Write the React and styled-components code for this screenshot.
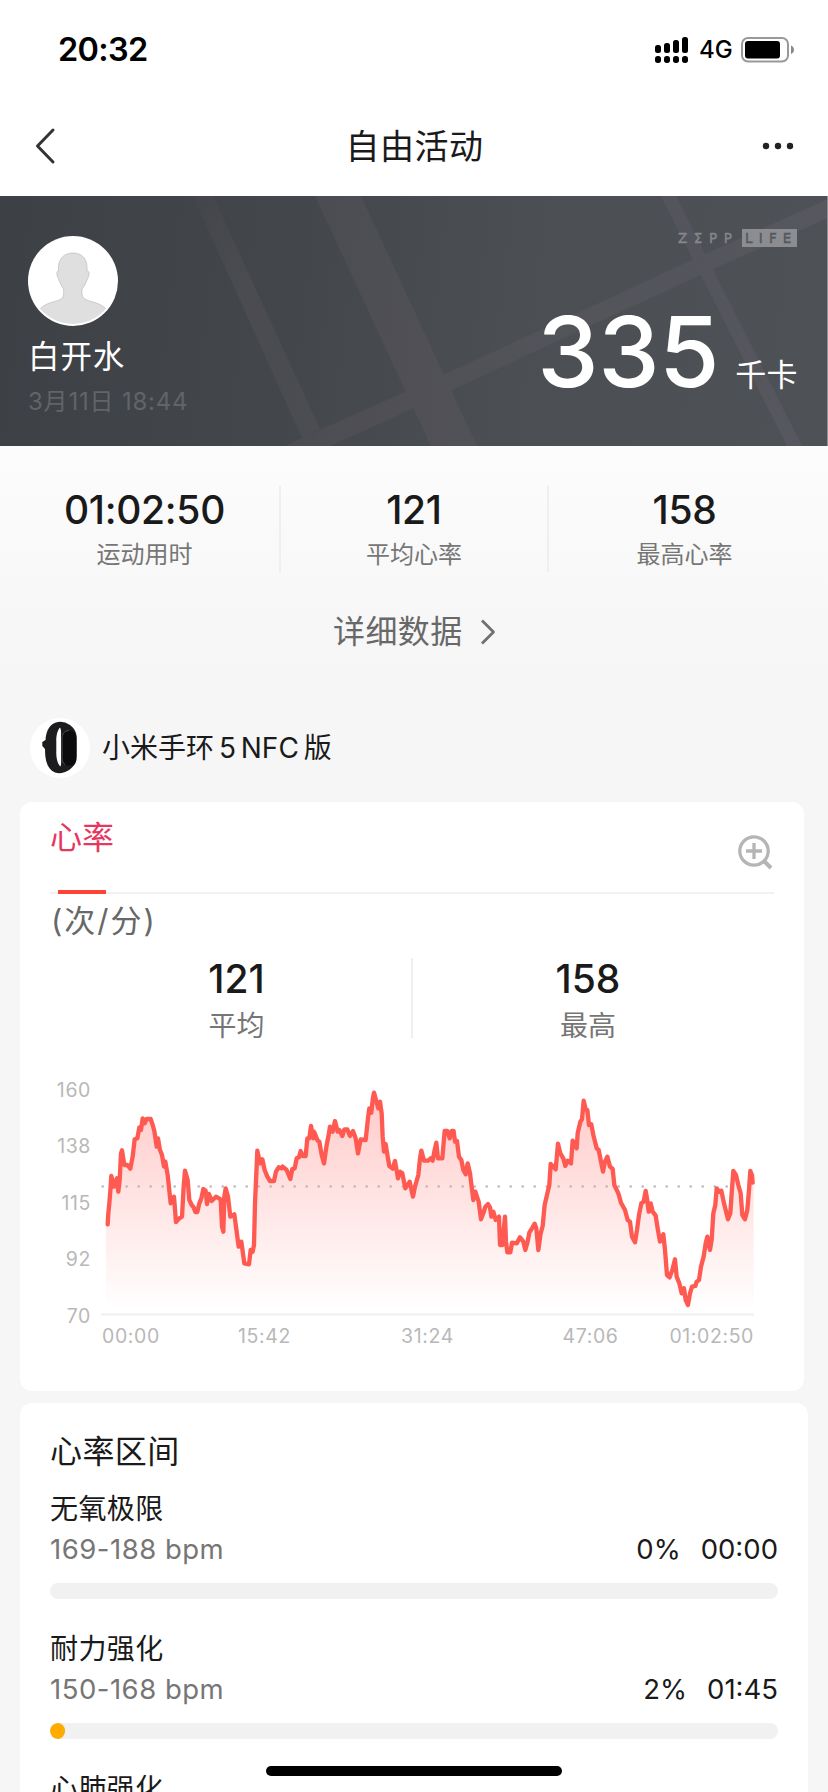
import React from "react";
import styled, { createGlobalStyle } from "styled-components";

const GlobalStyle = createGlobalStyle`
  * { box-sizing: border-box; }
  body {
    margin: 0;
    background: #f6f6f6;
    font-family: Inter, "Noto Sans CJK SC", sans-serif;
    color: #1a1a1a;
  }
`;

const Screen = styled.div`
  position: relative;
  width: 828px;
  height: 1792px;
  overflow: hidden;
  background: #f6f6f6;
`;

const Text = styled.span`
  display: block;
  white-space: nowrap;
  font-size: ${(p) => p.$size}px;
  line-height: ${(p) => p.$line}px;
  font-weight: ${(p) => p.$weight || 400};
  letter-spacing: ${(p) => p.$spacing || 0}px;
  color: ${(p) => p.$color || "#1a1a1a"};
`;

const StatusBar = styled.div`
  display: flex;
  align-items: center;
  justify-content: space-between;
  height: 100px;
  padding: 0 34px 0 58px;
  background: #fff;
`;

const StatusIcons = styled.div`
  display: flex;
  align-items: center;
`;

const Network = styled(Text)`
  margin: 0 10px 0 11px;
  width: 32px;
`;

const NavBar = styled.div`
  display: flex;
  align-items: center;
  justify-content: space-between;
  height: 96px;
  padding: 0 34px;
  background: #fff;

  svg { display: block; margin-top: -4px; }
`;

const NavTitle = styled(Text)`
  margin-top: -3px;
  padding-left: 11px;
`;

const Hero = styled.section`
  position: relative;
  display: flex;
  justify-content: space-between;
  height: 250px;
  padding: 33px 30px 0 28px;
  border-right: 1px solid #909296;
  background: linear-gradient(97deg, #3d4045 0%, #43464b 35%, #4b4e53 62%, #4e5156 100%);
`;

const Roads = styled.svg`
  position: absolute;
  left: 0;
  top: 0;
`;

const HeroSide = styled.div`
  position: relative;
  display: flex;
  flex-direction: column;
  align-items: ${(p) => (p.$end ? "flex-end" : "flex-start")};
`;

const Avatar = styled.svg`
  display: block;
  margin: 7px 0 8px;
`;

const Brand = styled.div`
  display: flex;
  align-items: center;
  height: 18px;
`;

const BrandWord = styled(Text)`
  width: 64px;
  font-family: "DejaVu Sans", sans-serif;
  -webkit-text-stroke: 0.4px currentColor;
`;

const BrandBox = styled.div`
  width: 55px;
  height: 18px;
  padding-left: 3px;
  background: #8b8d91;
`;

const Calories = styled.div`
  display: flex;
  align-items: flex-start;
  margin-top: 45px;
`;

const Unit = styled(Text)`
  margin: 43px -1px 0 16px;
`;

const Summary = styled.section`
  height: 256px;
  padding: 40px 8px 0;
  background: linear-gradient(#fcfcfc, #f6f6f6 85%);
`;

const StatRow = styled.div`
  display: grid;
  grid-template-columns: ${(p) => p.$columns};
  grid-template-rows: 100%;
  height: ${(p) => p.$height}px;
  padding: 0 ${(p) => p.$inset || 0}px;
`;

const Stat = styled.div`
  display: flex;
  flex-direction: column;
  align-items: center;
  border-left: 2px solid ${(p) => (p.$divided ? "#efefef" : "transparent")};
`;

const DetailLink = styled.div`
  display: flex;
  align-items: center;
  gap: 17px;
  height: 48px;
  margin: 36px 0 0 325px;

  svg { display: block; }
`;

const Device = styled.div`
  display: flex;
  align-items: center;
  gap: 12px;
  height: 60px;
  margin: 16px 0 24px 30px;

  svg { display: block; }
`;

const DeviceName = styled(Text)`
  word-spacing: -3px;
`;

const Card = styled.section`
  width: ${(p) => p.$width}px;
  height: ${(p) => p.$height}px;
  margin: 0 0 12px 20px;
  padding: 0 30px;
  border-radius: 12px;
  background: #fff;
`;

const TabBar = styled.div`
  display: flex;
  justify-content: space-between;
  height: 92px;
  border-bottom: 2px solid #f1f1f1;
`;

const Tab = styled.div`
  display: flex;
  flex-direction: column;
  align-items: center;
  justify-content: space-between;
  width: 64px;
  height: 92px;
  padding-top: 12px;
`;

const TabMark = styled.div`
  width: 48px;
  height: 4px;
  background: #ff4336;
`;

const ZoomIcon = styled.svg`
  display: block;
  margin-top: 30px;
`;

const Units = styled(Text)`
  margin: 3px 0 13px 1px;
`;

const Chart = styled.svg`
  display: block;
  margin-top: 32px;
`;

const ZoneTitle = styled(Text)`
  padding-top: 25px;
  margin-bottom: 13px;
`;

const Zone = styled.div`
  height: 140px;
`;

const ZoneFigures = styled.div`
  display: flex;
  justify-content: space-between;
  height: 40px;
`;

const ZoneValues = styled.div`
  display: flex;
  gap: 20px;
`;

const Track = styled.div`
  height: 16px;
  margin-top: 14px;
  border-radius: 8px;
  background: #f1f1f1;
  overflow: hidden;
`;

const Fill = styled.div`
  height: 16px;
  border-radius: 8px;
  background: #ffab00;
`;

const HomeIndicator = styled.div`
  position: absolute;
  left: 266px;
  bottom: 16px;
  width: 296px;
  height: 10px;
  border-radius: 5px;
  background: #000;
`;

/* Heart-rate trace, three units per pixel, origin at the chart's top left. */
const TRACE = `203,463 205,430 208,400 212,350 214,318 222,350 231,325 235,365 239,330 243,250
246,241 253,285 262,285 271,296 278,260 284,208 292,205 298,172 303,180 308,145 314,160 320,147
332,147 338,165 343,183 350,230 354,205 360,240 366,255 372,290 376,275 383,315 392,400 402,380
408,456 418,445 426,440 431,350 435,302 443,330 448,390 455,405 461,412 466,426 472,426 478,400
484,385 490,357 497,362 501,402 507,372 515,393 528,380 542,388 546,470 550,485 553,380 557,355
564,380 571,440 583,433 588,470 596,530 604,515 613,580 627,583 632,540 638,545 642,525 645,400
652,242 660,280 667,268 674,300 682,320 690,333 702,333 708,305 716,292 724,295 728,290 740,300
751,327 757,297 764,295 770,265 777,262 782,243 788,258 797,258 802,205 808,205 813,168 820,205
822,185 833,212 838,215 845,255 852,280 860,225 866,195 870,170 878,185 885,153 893,185 898,180
907,198 913,178 922,178 930,198 939,183 947,205 954,250 962,208 977,210 984,145 988,115 994,128
998,90 1002,68 1008,90 1015,115 1020,95 1025,130 1028,200 1032,245 1037,222 1043,260 1048,288
1058,296 1065,273 1074,325 1080,305 1087,310 1096,355 1109,335 1119,380 1125,350 1135,315
1140,265 1144,242 1152,272 1164,272 1172,265 1178,272 1184,240 1189,218 1194,265 1207,265
1210,230 1214,183 1222,183 1229,205 1235,183 1241,183 1245,215 1251,213 1257,260 1264,270
1270,300 1277,313 1283,280 1290,310 1295,350 1300,390 1306,365 1316,395 1323,448 1330,430
1336,410 1344,402 1350,412 1354,440 1360,425 1367,450 1377,440 1380,525 1387,525 1395,440
1398,515 1402,547 1411,547 1416,518 1430,520 1440,502 1450,515 1456,540 1463,515 1468,488
1476,475 1484,461 1489,475 1495,540 1502,490 1508,468 1514,405 1521,375 1528,345 1532,282
1547,298 1554,221 1561,250 1570,265 1576,288 1583,272 1593,280 1598,212 1610,235 1613,190
1621,155 1626,148 1631,92 1637,118 1642,120 1647,165 1654,163 1660,195 1670,235 1676,240
1682,270 1689,305 1695,275 1702,260 1710,290 1718,297 1723,345 1735,370 1743,398 1755,420
1763,450 1770,455 1776,500 1785,517 1791,480 1797,435 1804,400 1811,395 1817,363 1821,385
1826,425 1832,400 1838,425 1847,437 1853,475 1860,515 1870,493 1875,540 1881,615 1889,622
1897,600 1905,568 1910,620 1918,640 1925,670 1932,655 1937,690 1944,705 1950,670 1956,650
1966,648 1970,635 1977,630 1983,590 1991,560 1997,520 2002,500 2010,540 2015,510 2020,430
2026,405 2030,355 2037,365 2044,362 2052,400 2064,448 2071,430 2075,370 2080,303 2088,315
2095,345 2102,370 2107,435 2115,448 2122,420 2127,360 2131,303 2136,315 2138,338`;

const Y_TICKS = [
  ["160", 19.5],
  ["138", 75.5],
  ["115", 132.5],
  ["92", 188.5],
  ["70", 245.5],
];
const X_TICKS = [
  ["00:00", 62, "start"],
  ["15:42", 224.5, "middle"],
  ["31:24", 387.5, "middle"],
  ["47:06", 550.5, "middle"],
  ["01:02:50", 714, "end"],
];

function HeartRateChart() {
  return (
    <Chart width="724" height="290" viewBox="10 0 724 290">
      <defs>
        <linearGradient id="area" gradientUnits="userSpaceOnUse" x1="0" y1="68" x2="0" y2="725">
          <stop offset="0" stopColor="#ff5550" stopOpacity="0.31" />
          <stop offset="1" stopColor="#ff5550" stopOpacity="0" />
        </linearGradient>
      </defs>
      <g transform="scale(0.33333)">
        <polygon points={`198,733 198,463 ${TRACE} 2141,338 2141,733`} fill="url(#area)" />
      </g>
      <line x1="62.7" y1="116.5" x2="700" y2="116.5" stroke="#bdb6b6" strokeWidth="2.6" strokeLinecap="round" strokeDasharray="0 12" />
      <line x1="61" y1="244.5" x2="714" y2="244.5" stroke="#f3f2f3" strokeWidth="2.5" />
      <g transform="scale(0.33333)">
        <polyline points={TRACE} fill="none" stroke="#ff5a52" strokeWidth="13" strokeLinejoin="round" strokeLinecap="round" />
      </g>
      <g fill="#b8b8b8" fontSize="19.5" letterSpacing="0.6">
        {Y_TICKS.map(([label, y]) => (
          <text key={label} x="51" y={y + 7} textAnchor="end">{label}</text>
        ))}
        {X_TICKS.map(([label, x, anchor]) => (
          <text key={label} x={x} y="272.5" textAnchor={anchor}>{label}</text>
        ))}
      </g>
    </Chart>
  );
}

const ZONES = [
  { name: "无氧极限", range: "169-188 bpm", percent: "0%", time: "00:00", fill: 0 },
  { name: "耐力强化", range: "150-168 bpm", percent: "2%", time: "01:45", fill: 2.06 },
  { name: "心肺强化" },
];

const SUMMARY = [
  ["01:02:50", "运动用时"],
  ["121", "平均心率"],
  ["158", "最高心率"],
];

export default function App() {
  return (
    <Screen>
      <GlobalStyle />
      <StatusBar>
        <Text $size={32.5} $line={40} $weight={600} $spacing={-0.7} $color="#000">20:32</Text>
        <StatusIcons>
          <svg width="33" height="26" viewBox="0 0 33 26">
            <rect x="0" y="8" width="6" height="8" rx="2.5" />
            <rect x="9" y="6" width="6" height="10" rx="2.5" />
            <rect x="18" y="3" width="6" height="13" rx="2.5" />
            <rect x="27" y="0" width="6" height="16" rx="2.5" />
            {[0, 9, 18, 27].map((x) => (
              <rect key={x} x={x} y="19" width="6" height="7" rx="2.7" />
            ))}
          </svg>
          <Network $size={24} $line={30} $weight={450} $color="#000">4G</Network>
          <svg width="53" height="26" viewBox="0 0 53 26">
            <rect x="1" y="1" width="46" height="23.5" rx="6" fill="none" stroke="#999" strokeWidth="2" />
            <rect x="4" y="4" width="35" height="17.5" rx="3" />
            <path d="M50 8.500c4 1.500 4 7 0 8.500z" fill="#888" />
          </svg>
        </StatusIcons>
      </StatusBar>
      <NavBar>
        <svg width="22" height="38" viewBox="0 0 22 38" fill="none" stroke="#333" strokeWidth="3">
          <path d="M19 3L3.500 19L19 35" strokeLinecap="round" strokeLinejoin="round" />
        </svg>
        <NavTitle $size={34} $line={48} $spacing={0.5}>自由活动</NavTitle>
        <svg width="32" height="10" viewBox="0 0 32 10" fill="#222">
          <circle cx="4" cy="5" r="3.2" />
          <circle cx="16" cy="5" r="3.2" />
          <circle cx="28" cy="5" r="3.2" />
        </svg>
      </NavBar>
      <Hero>
        <Roads width="827" height="250" viewBox="0 0 827 250">
          <defs>
            <linearGradient id="fade" gradientUnits="userSpaceOnUse" x1="190" y1="0" x2="240" y2="90">
              <stop offset="0" stopColor="#5e5a61" stopOpacity="0.25" />
              <stop offset="1" stopColor="#5e5a61" />
            </linearGradient>
            <linearGradient id="road" gradientUnits="userSpaceOnUse" x1="300" y1="0" x2="800" y2="0">
              <stop offset="0" stopColor="#5e5a61" />
              <stop offset="1" stopColor="#6a6472" />
            </linearGradient>
          </defs>
          <g opacity="0.32" fill="url(#road)">
            <path d="M193 0H213L320 233L302 242Z" fill="url(#fade)" />
            <path d="M315 0H361L477 250H431Z" />
            <path d="M661 0H676L802 250H787Z" />
            <path d="M285 250L302 242L405 196L445 178L692 64L828 3V22L711 74L452 194L414 212L337 247L330 250Z" />
          </g>
        </Roads>
        <HeroSide>
          <Avatar width="90" height="90" viewBox="0 0 90 90">
            <defs>
              <clipPath id="face"><circle cx="45" cy="45" r="43" /></clipPath>
            </defs>
            <circle cx="45" cy="45" r="45" fill="#fff" />
            <path
              clipPath="url(#face)"
              d="M45 17C36 17 30.500 23 30.500 31V35C28 35 28.500 39 30.500 43C32 46 33 50 35.500 53C36 58 35.500 61 34 62.500C29 66 18 66 12 73L12 90H78V73C72 66 61 66 56 62.500C54.500 61 53.500 58 54 53C57 50 58 46 59.500 43C61.500 39 62 35 59 35V31C59 23 54 17 45 17Z"
              fill="#dfdfdf"
              stroke="#b5b5b5"
              strokeWidth="0.6"
            />
          </Avatar>
          <Text $size={31.5} $line={46} $spacing={0.9} $color="#fff">白开水</Text>
          <Text $size={24} $line={44} $spacing={0.8} $color="#626468">3月11日 18:44</Text>
        </HeroSide>
        <HeroSide $end>
          <Brand>
            <BrandWord $size={13.5} $line={18} $spacing={6.6} $color="#85878b">ZΣPP</BrandWord>
            <BrandBox>
              <BrandWord as="span" $size={13.5} $line={18} $spacing={6.2} $color="#55575c">LIFE</BrandWord>
            </BrandBox>
          </Brand>
          <Calories>
            <Text $size={98} $line={120} $weight={500} $spacing={-0.5} $color="#fff">335</Text>
            <Unit $size={31} $line={80} $spacing={0.4} $color="#fff">千卡</Unit>
          </Calories>
        </HeroSide>
      </Hero>
      <Summary>
        <StatRow $columns="271px 268px 273px" $height={86}>
          {SUMMARY.map(([value, label], i) => (
            <Stat key={label} $divided={i > 0}>
              <Text $size={39} $line={48} $weight={500} $spacing={-0.3}>{value}</Text>
              <Text $size={24} $line={42} $color="#767676">{label}</Text>
            </Stat>
          ))}
        </StatRow>
        <DetailLink>
          <Text $size={32} $line={48} $spacing={0.4} $color="#686868">详细数据</Text>
          <svg width="16" height="28" viewBox="0 0 16 28" fill="none" stroke="#707070" strokeWidth="2.8">
            <path d="M2 2.500L13.500 14L2 25.500" strokeLinejoin="round" />
          </svg>
        </DetailLink>
      </Summary>
      <Device>
        <svg width="60" height="60" viewBox="0 0 60 60">
          <circle cx="30" cy="30" r="30" fill="#fff" />
          <path
            fillRule="evenodd"
            d="M28 4C20 5 16 13 15.500 22L12.300 24L12.300 28L15 31C15 42 17 51 25 54.500C32 57 40 53 45 46Q46.700 43 46.700 38V20Q46.700 12 40 7Q34 3 28 4ZM30 9.500C27.500 12 26 18 26.300 24V33C26 40 27.500 46 30.500 48.500C31.500 46 31 42 31 38V20C31 15 31.500 12 30 9.500Z"
            fill="#1c1c1e"
          />
          <rect x="31.500" y="12.500" width="14.800" height="35" rx="6.500" fill="#0b0b0d" />
          <path d="M39 12.500C34 13 32 16 32 20V40C32 43 33 45 35 46.500" fill="none" stroke="#5a5a5c" strokeWidth="0.9" />
        </svg>
        <DeviceName $size={28} $line={42} $spacing={0}>小米手环 5 NFC 版</DeviceName>
      </Device>
      <Card $width={784} $height={589}>
        <TabBar>
          <Tab>
            <Text $size={32} $line={48} $color="#e8375f">心率</Text>
            <TabMark />
          </Tab>
          <ZoomIcon width="44" height="44" viewBox="0 0 44 44" fill="none" stroke="#b5b5b5" strokeWidth="3.3">
            <circle cx="24" cy="19" r="14.200" />
            <path d="M34 29L41 36" strokeWidth="4" />
            <path d="M24 11V27M16 19H32" />
          </ZoomIcon>
        </TabBar>
        <Units $size={31} $line={48} $spacing={2} $color="#686868">(次/分)</Units>
        <StatRow $columns="351px 352px" $height={80} $inset={10}>
          <Stat>
            <Text $size={39} $line={42} $weight={500}>121</Text>
            <Text $size={28} $line={52} $color="#767676">平均</Text>
          </Stat>
          <Stat $divided>
            <Text $size={39} $line={42} $weight={500}>158</Text>
            <Text $size={28} $line={52} $color="#767676">最高</Text>
          </Stat>
        </StatRow>
        <HeartRateChart />
      </Card>
      <Card $width={788} $height={480}>
        <ZoneTitle $size={32} $line={48} $spacing={0.4}>心率区间</ZoneTitle>
        {ZONES.map((zone) => (
          <Zone key={zone.name}>
            <Text $size={28} $line={40} $spacing={0.4}>{zone.name}</Text>
            {zone.range && (
              <>
                <ZoneFigures>
                  <Text $size={27.5} $line={40} $spacing={0.5} $color="#767676">{zone.range}</Text>
                  <ZoneValues>
                    <Text $size={27.5} $line={40}>{zone.percent}</Text>
                    <Text $size={27.5} $line={40}>{zone.time}</Text>
                  </ZoneValues>
                </ZoneFigures>
                <Track>
                  <Fill style={{ width: `${zone.fill}%` }} />
                </Track>
              </>
            )}
          </Zone>
        ))}
      </Card>
      <HomeIndicator />
    </Screen>
  );
}
